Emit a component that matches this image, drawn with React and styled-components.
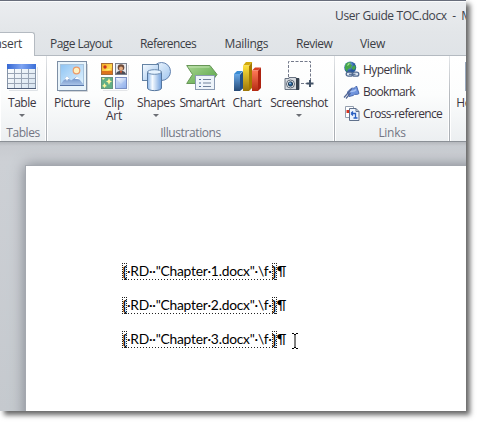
import React from "react";
import styled, { createGlobalStyle } from "styled-components";

const GlobalStyle = createGlobalStyle`
  * { box-sizing: border-box; }
  body { margin: 0; min-height: 426px; background: #fff; font-family: "Open Sans", "Noto Sans", sans-serif; }
`;

const Window = styled.main`
  position: relative;
  width: 466px;
  height: 411px;
  box-shadow: 4px 4px 5px rgba(0, 0, 0, 0.6);
`;
const Clip = styled.div`
  width: 466px;
  height: 411px;
  overflow: hidden;
  display: flex;
  flex-direction: column;
`;
const TitleBar = styled.header`
  height: 32px;
  flex: none;
  border-top: 1px solid #686d7b;
  box-shadow: inset 0 1px #fafbfc;
  background: linear-gradient(#ebedf0, #e3e6e9);
  padding: 5px 0 0 335px;
  font-size: 12px;
  line-height: 20px;
  color: #3e424b;
  white-space: pre;
  letter-spacing: ${(p) => p.$ls}px;
`;
const TabRow = styled.nav`
  height: 24px;
  flex: none;
  display: flex;
  background: linear-gradient(#e3e6e9, #dfe3e7);
  box-shadow: inset 0 -1px #b4bac1;
`;
const Tab = styled.div`
  width: ${(p) => p.$w}px;
  flex: none;
  height: 24px;
  line-height: 24px;
  font-size: 12px;
  color: #3b3d45;
  white-space: nowrap;
  letter-spacing: ${(p) => p.$ls}px;
`;
const ActiveTab = styled(Tab)`
  display: flex;
  justify-content: flex-end;
  padding-right: 12px;
  margin-right: 15px;
  background: #fff;
  border: solid #b4bac1;
  border-width: 1px 1px 0 0;
  border-radius: 0 3px 0 0;
  line-height: 22px;
`;
const Ribbon = styled.section`
  height: 86px;
  flex: none;
  display: flex;
  background: linear-gradient(#fff 0%, #fcfdfd 45%, #eceff1 100%);
  border-bottom: 1px solid #8b9096;
`;
const Group = styled.div`
  width: ${(p) => p.$w}px;
  flex: none;
  display: flex;
  flex-direction: column;
  justify-content: space-between;
  border-right: 1px solid;
  border-image: linear-gradient(#e4e7ea, #b6babf 45%, #a9aeb4) 1;
  box-shadow: inset -1px 0 #fff, inset 1px 0 #fff;
  overflow: hidden;
`;
const Buttons = styled.div`
  display: flex;
  padding: 4px 0 0 ${(p) => p.$left}px;
`;
const Button = styled.div`
  width: ${(p) => p.$w}px;
  flex: none;
  display: flex;
  flex-direction: column;
  align-items: center;
  font-size: 12px;
  line-height: 13px;
  color: #3b3540;
  white-space: nowrap;
`;
const Label = styled.span`
  margin-top: 4px;
  text-align: center;
  white-space: pre;
  letter-spacing: ${(p) => p.$ls}px;
`;
const Arrow = styled.i`
  margin-top: 5px;
  border: solid transparent;
  border-width: 3px 3px 0;
  border-top-color: #6c6f75;
`;
const Caption = styled.div`
  height: 17px;
  line-height: 17px;
  text-align: center;
  font-size: 12px;
  color: #737684;
  letter-spacing: ${(p) => p.$ls}px;
`;
const LinkList = styled.div`
  padding: 2px 0 0 8px;
`;
const LinkItem = styled.div`
  display: flex;
  align-items: center;
  gap: 3px;
  height: 22px;
  font-size: 12px;
  color: #3b3540;
  white-space: nowrap;
  letter-spacing: ${(p) => p.$ls}px;
`;
const Workspace = styled.section`
  flex: 1;
  min-height: 0;
  padding: 24px 0 0 26px;
  background: linear-gradient(#b5b8bd 0, #c8cbd0 4px, #cdd0d5 20px, #c5c9ce 100%);
`;
const Page = styled.article`
  width: 520px;
  height: 300px;
  padding: 94px 0 0 96px;
  background: #fff;
  box-shadow: 0 0 0 1px #a4a8af, 0 0 13px 1px #7e838b;
`;
const Field = styled.p`
  margin: 0;
  height: 34px;
  display: flex;
  align-items: flex-start;
  font: 13.8px/22px Lato, sans-serif;
  color: #000;
  white-space: pre;
`;
const Code = styled.span`
  display: flex;
  height: 22px;
  letter-spacing: ${(p) => p.$ls}px;
  background: repeating-linear-gradient(90deg, #222 0 1px, transparent 1px 3px) 0 19px / 100% 1px no-repeat;
`;
const Brace = styled.b`
  width: 5px;
  height: 17px;
  margin-top: 3px;
  line-height: 15px;
  letter-spacing: 0;
  display: flex;
  justify-content: center;
  border: 1px dotted #222;
`;
const Pilcrow = styled.span`
  margin-left: 0;
`;
const Pointer = styled.svg`
  position: absolute;
  left: 291px;
  top: 333px;
`;

const Icon = ({ children }) => (
  <svg width="32" height="32" viewBox="0 0 32 32">{children}</svg>
);

const TableIcon = () => (
  <Icon>
    <defs>
      <linearGradient id="th" x2="1" y2="0"><stop stopColor="#3567d2" /><stop offset=".5" stopColor="#7fa5f2" /><stop offset="1" stopColor="#3b6fd8" /></linearGradient>
      <linearGradient id="tb" x2="1" y2="1"><stop stopColor="#fff" /><stop offset="1" stopColor="#d6e3ef" /></linearGradient>
    </defs>
    <path d="M3 30.500H31.500V7" fill="none" stroke="#dfe3e7" />
    <rect x="1.500" y="4.500" width="28" height="24" fill="url(#tb)" stroke="#8594a8" />
    <rect x="1" y="4" width="29" height="5" fill="url(#th)" />
    <path d="M8.500 9v19M15.500 9v19M22.500 9v19M2 13.500h27M2 18.500h27M2 23.500h27" stroke="#9aa5b5" />
    <path d="M1 28.500h29" stroke="#4e5d78" />
  </Icon>
);
const PictureIcon = () => (
  <Icon>
    <defs>
      <linearGradient id="sky" x2="1" y2="1"><stop stopColor="#8fc4f3" /><stop offset="1" stopColor="#e3f4ff" /></linearGradient>
      <linearGradient id="hill" x2="0" y2="1"><stop stopColor="#5f83bd" /><stop offset="1" stopColor="#a9c4e8" /></linearGradient>
    </defs>
    <path d="M3 31.500H31.500V4" fill="none" stroke="#d3d6da" />
    <rect x="1.500" y="1.500" width="29" height="29" fill="#e9f4fb" stroke="#7d8fa5" />
    <rect x="4.500" y="4.500" width="23" height="21" fill="url(#sky)" stroke="#a8c3db" />
    <circle cx="20.500" cy="10.500" r="3.300" fill="#fff0c0" stroke="#ec9a69" strokeWidth="1.200" />
    <path d="M4 25L11 16L15 20.500L21 16.500L28 25Z" fill="url(#hill)" />
    <path d="M8 20l3-4 3 3.500-2-.5-1 2-1-2zM18.500 19l2.500-2.500 3 3-3-.5z" fill="#fff" />
    <path d="M4 25.500h24" stroke="#5978aa" />
  </Icon>
);
const ClipArtIcon = () => (
  <Icon>
    <defs>
      <linearGradient id="sun" x2="1" y2="1"><stop stopColor="#f6a821" /><stop offset=".6" stopColor="#ffd94f" /><stop offset="1" stopColor="#e77f17" /></linearGradient>
      <linearGradient id="fold" x2="1" y2="1"><stop stopColor="#fff" /><stop offset="1" stopColor="#8daeea" /></linearGradient>
    </defs>
    <rect x="3.500" y="3.500" width="11" height="11" fill="url(#sun)" stroke="#a66d38" />
    <path d="M4 11h10v3H4z" fill="#dd741c" />
    <circle cx="7" cy="7" r="1.700" fill="#c9301f" />
    <path d="M7 10l4-1 3 1z" fill="#fff07c" />
    <rect x="17.500" y="3.500" width="11" height="11" fill="#e8e9ed" stroke="#7b818e" />
    <circle cx="23" cy="7.500" r="3.300" fill="#6c4b3b" />
    <circle cx="23" cy="8.500" r="2" fill="#e9ae82" />
    <path d="M18 14c1-3 2.500-3 5-3s4 .5 5 3z" fill="#4c4d56" />
    <path d="M22 11h2l-1 3z" fill="#e35b2b" />
    <rect x="3.500" y="17.500" width="11" height="11" fill="#62af87" stroke="#65967c" />
    <path d="M11 18l1 2.500 2 1-2 1-1 2.500-1-2.500-2-1 2-1zM6.500 23l1 2 1.500 1-1.500.5-1 1.500-1-1.500L4 26l1.500-1zM4 18h3l-2 2z" fill="#fff49a" />
    <rect x="17.500" y="17.500" width="11" height="11" fill="url(#fold)" stroke="#7b8fc4" />
    <path d="M18 18l5 6 5-5v9H18z" fill="#8fb0ee" opacity=".35" />
    <path d="M5 30.500h24.500M30.500 5v25" fill="none" stroke="#e4e6e9" />
  </Icon>
);
const ShapesIcon = () => (
  <Icon>
    <defs>
      <linearGradient id="sq" x2="1" y2="1"><stop stopColor="#f4faff" /><stop offset="1" stopColor="#9fc4ee" /></linearGradient>
      <linearGradient id="cyl" x2="1" y2="0"><stop stopColor="#8ab5e8" /><stop offset=".35" stopColor="#f6fbff" /><stop offset="1" stopColor="#6f9fdd" /></linearGradient>
    </defs>
    <circle cx="21.500" cy="11.500" r="9" fill="url(#sq)" stroke="#6483b0" />
    <rect x="2.500" y="4.500" width="16" height="16" fill="url(#sq)" stroke="#6483a5" />
    <path d="M7.500 12v16c0 3.500 14 3.500 14 0V12z" fill="url(#cyl)" stroke="#56779f" />
    <ellipse cx="14.500" cy="12" rx="7" ry="2.300" fill="#e6f3ff" stroke="#6b8bb0" />
  </Icon>
);
const SmartArtIcon = () => (
  <Icon>
    <defs><linearGradient id="green" x2="1" y2="1"><stop stopColor="#a9d592" /><stop offset="1" stopColor="#55a445" /></linearGradient></defs>
    <path d="M.7 5.500H24L31 14.500 24.500 23.500H.7L6.500 14.500Z" fill="url(#green)" stroke="#679657" />
    <path d="M2.500 7H23.500" stroke="#c4e4b4" />
    <rect x="9.500" y="15.500" width="19" height="14" fill="#eef4fa" stroke="#8a9ab2" />
    <path d="M13 19.500h2M13 23h2M13 26.500h2" stroke="#547199" />
    <path d="M17 19.500h8M17 23h8M17 26.500h8" stroke="#71829b" />
  </Icon>
);
const ChartIcon = () => (
  <Icon>
    <defs>
      <linearGradient id="bl" x2="0" y2="1"><stop stopColor="#68a8e8" /><stop offset="1" stopColor="#264a76" /></linearGradient>
      <linearGradient id="ye" x2="0" y2="1"><stop stopColor="#ffe23d" /><stop offset="1" stopColor="#9d7608" /></linearGradient>
      <linearGradient id="rd" x2="0" y2="1"><stop stopColor="#ff7957" /><stop offset="1" stopColor="#b42a12" /></linearGradient>
    </defs>
    <path d="M9 14.500l3-3v17L9 31z" fill="#214f87" />
    <path d="M3 14l3-3h6l-3 3z" fill="#398bd3" />
    <path d="M3 14h6v17H3z" fill="url(#bl)" />
    <path d="M18 6l3-4v26l-3 3z" fill="#a47a00" />
    <path d="M12 5.500L15 2h6.500L18 5.500z" fill="#d2aa0c" />
    <path d="M12 5.500h6V31h-6z" fill="url(#ye)" />
    <path d="M27 10.500l3-3V28l-3 3z" fill="#ad2210" />
    <path d="M21 10.500l3-3h6l-3 3z" fill="#d94225" />
    <path d="M21 10.500h6V31h-6z" fill="url(#rd)" />
  </Icon>
);
const ScreenshotIcon = () => (
  <Icon>
    <path d="M5.500 17V1.500H27.500V20M18 23.500h6" fill="none" stroke="#747a8b" strokeDasharray="3 1.500" />
    <path d="M27 20v7M23.500 23.500h7" stroke="#435266" strokeWidth="2" />
    <path d="M2 18.500h4v-1h7v1h3v11H2z" fill="#d8dce1" stroke="#697382" />
    <path d="M13 18h3v12h-3z" fill="#36414e" />
    <circle cx="7.500" cy="24" r="4" fill="#eef1f4" stroke="#5d6875" />
    <circle cx="7.500" cy="24" r="2.200" fill="#2d659d" stroke="#233d55" />
    <circle cx="7" cy="23.300" r=".8" fill="#bce4ff" />
  </Icon>
);
const HeaderIcon = () => (
  <Icon>
    <rect x="5.500" y="2.500" width="22" height="28" fill="#eaf2fa" stroke="#9aa9bd" />
    <path d="M8 5h17v6H8z" fill="#7ba4dc" />
  </Icon>
);
const HyperlinkIcon = () => (
  <svg width="17" height="17" viewBox="0 0 17 17">
    <defs><radialGradient id="globe" cx=".35" cy=".3"><stop stopColor="#9dcaff" /><stop offset="1" stopColor="#24569e" /></radialGradient></defs>
    <circle cx="7.200" cy="6.500" r="6" fill="url(#globe)" />
    <path d="M3 2.500C5 1 7 1 8 1.500L7 3l2 1-1 3-3 1-1 3-2-3V5zM9 6l3-2 .8 3L11 9 9 8z" fill="#45a64a" />
    <path d="M5 2.500l2-.5-1 2-2 1z" fill="#a4dc90" />
    <g fill="#dbe5f1" stroke="#536b91" strokeWidth="1.300"><rect x="3.200" y="11.200" width="6.300" height="4" rx="2" /><rect x="9.500" y="11.200" width="6.300" height="4" rx="2" /></g>
    <path d="M6 13.300h6.500" stroke="#536b91" strokeWidth="1.200" />
  </svg>
);
const BookmarkIcon = () => (
  <svg width="17" height="17" viewBox="0 0 17 17">
    <path d="M4.500 9L8 5.500c2-1 3 .5 4-1l1.500-1.500 2.500 7.500C14 12.500 12 10 10 12.500L6 13.500z" fill="#7195df" stroke="#4868ae" />
    <path d="M7 8.500c2-1 4 1 6-2" fill="none" stroke="#a9c3f3" strokeWidth="1.500" />
    <path d="M1 14.500L8.500 6M3 15.500L7.500 10" stroke="#526694" strokeWidth="1.200" />
  </svg>
);
const CrossRefIcon = () => (
  <svg width="17" height="17" viewBox="0 0 17 17">
    <path d="M2.500 1.500h8v11h-8z" fill="#fff" stroke="#949eae" />
    <path d="M3.500 5h3v3h-3z" fill="#d6331f" />
    <path d="M6.500 3.500H13l3 3v9H6.500z" fill="#edf4fd" stroke="#60718c" />
    <path d="M13 3.500v3h3" fill="none" stroke="#60718c" />
    <path d="M8 8.500h4.500V13M8 8.500l2-2M8 8.500l2 2M10.500 13h4" fill="none" stroke="#285ec1" strokeWidth="1.300" />
  </svg>
);

const illustrations = [
  { label: "Picture", w: 44, icon: PictureIcon, ls: -0.45 },
  { label: "Clip\nArt", w: 40, icon: ClipArtIcon, ls: -0.25 },
  { label: "Shapes", w: 44, icon: ShapesIcon, ls: -0.4, menu: true },
  { label: "SmartArt", w: 48, icon: SmartArtIcon, ls: -0.65 },
  { label: "Chart", w: 42, icon: ChartIcon, ls: -0.4 },
  { label: "Screenshot", w: 62, icon: ScreenshotIcon, ls: -0.5, menu: true },
];
const tabs = [
  ["Page Layout", 90, -0.55],
  ["References", 84.5, -0.6],
  ["Mailings", 71.5, -0.3],
  ["Review", 64, -0.5],
  ["View", 60, -0.3],
];
const links = [
  ["Hyperlink", HyperlinkIcon, -0.6],
  ["Bookmark", BookmarkIcon, -0.7],
  ["Cross-reference", CrossRefIcon, -0.65],
];

const RibbonButton = ({ label, w, icon: Glyph, ls, menu }) => (
  <Button $w={w}>
    <Glyph />
    <Label $ls={ls}>{label}</Label>
    {menu && <Arrow />}
  </Button>
);

export default function App() {
  return (
    <>
      <GlobalStyle />
      <Window>
        <Clip>
          <TitleBar $ls={-0.37}>{"User Guide TOC.docx  -  Microsoft Word"}</TitleBar>
          <TabRow>
            <ActiveTab $w={35} $ls={-0.3}>Insert</ActiveTab>
            {tabs.map(([name, w, ls]) => <Tab key={name} $w={w} $ls={ls}>{name}</Tab>)}
          </TabRow>
          <Ribbon>
            <Group $w={47}>
              <Buttons $left={2}><RibbonButton label="Table" w={40} icon={TableIcon} ls={-0.5} menu /></Buttons>
              <Caption $ls={-0.45}>Tables</Caption>
            </Group>
            <Group $w={288}>
              <Buttons $left={3}>{illustrations.map((b) => <RibbonButton key={b.label} {...b} />)}</Buttons>
              <Caption $ls={-0.4}>Illustrations</Caption>
            </Group>
            <Group $w={115}>
              <LinkList>
                {links.map(([name, Glyph, ls]) => <LinkItem key={name} $ls={ls}><Glyph />{name}</LinkItem>)}
              </LinkList>
              <Caption $ls={-0.3}>Links</Caption>
            </Group>
            <Group $w={60}>
              <Buttons $left={6}>
                <RibbonButton label="Header" w={40} icon={HeaderIcon} ls={-0.25} />
              </Buttons>
            </Group>
          </Ribbon>
          <Workspace>
            <Page>
              {[1, 2, 3].map((n) => (
                <Field key={n}>
                  <Code $ls={-0.24}><Brace>{"{"}</Brace>{`·RD··"Chapter·${n}.docx"·\\f·`}<Brace>{"}"}</Brace></Code>
                  <Pilcrow>¶</Pilcrow>
                </Field>
              ))}
            </Page>
          </Workspace>
        </Clip>
        <Pointer width="8" height="16" viewBox="0 0 8 16">
          <path d="M1 .5h2M5 .5h2M3 1.500h2M4 1v14M3 14.500h2M1 15.500h2M5 15.500h2" stroke="#000" />
        </Pointer>
      </Window>
    </>
  );
}
